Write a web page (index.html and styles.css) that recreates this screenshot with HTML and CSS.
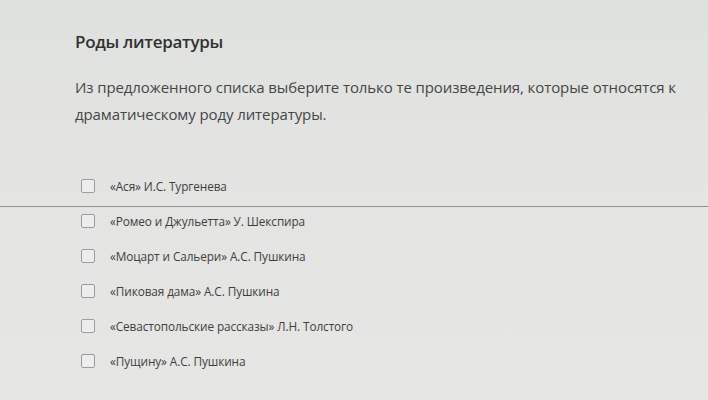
FILE: index.html
```html
<!DOCTYPE html>
<html lang="ru">
<head>
<meta charset="utf-8">
<title>Роды литературы</title>
<link rel="stylesheet" href="styles.css">
</head>
<body>
<div class="page">
  <section class="question">
    <h2 class="title">Роды литературы</h2>
    <p class="text">Из предложенного списка выберите только те произведения, которые относятся к драматическому роду литературы.</p>
  </section>
  <ul class="options">
    <li class="option"><span class="box"></span><span class="label">«Ася» И.С. Тургенева</span></li>
    <li class="divider"></li>
    <li class="option"><span class="box"></span><span class="label">«Ромео и Джульетта» У. Шекспира</span></li>
    <li class="option"><span class="box"></span><span class="label">«Моцарт и Сальери» А.С. Пушкина</span></li>
    <li class="option"><span class="box"></span><span class="label">«Пиковая дама» А.С. Пушкина</span></li>
    <li class="option"><span class="box"></span><span class="label">«Севастопольские рассказы» Л.Н. Толстого</span></li>
    <li class="option"><span class="box"></span><span class="label">«Пущину» А.С. Пушкина</span></li>
  </ul>
</div>
</body>
</html>
```
FILE: styles.css
```css
html, body {
  margin: 0;
  padding: 0;
}
body {
  width: 708px;
  height: 400px;
  overflow: hidden;
  background: linear-gradient(180deg, #dfe1de 0%, #e4e5e2 50%, #e6e7e4 100%);
  font-family: "Open Sans", "Noto Sans", sans-serif;
  color: #3b3c3c;
}
.page {
  padding-top: 30px;
}
.question {
  padding: 0 20px 0 75px;
}
.title {
  margin: 0;
  font-size: 17px;
  font-weight: 600;
  line-height: 24px;
  color: #2f3131;
  letter-spacing: -0.3px;
}
.text {
  margin: 20px 0 0;
  font-size: 15px;
  line-height: 27px;
  color: #444646;
  letter-spacing: -0.1px;
}
.options {
  list-style: none;
  margin: 40px 0 0;
  padding: 0;
}
.option {
  display: flex;
  align-items: center;
  height: 35px;
  padding-left: 81px;
}
.box {
  width: 12px;
  height: 12px;
  border: 1px solid #9b9d9c;
  border-radius: 2px;
  background: #eceded;
  flex: none;
}
.label {
  margin-left: 15px;
  font-size: 11.8px;
  color: #3d3e3e;
  letter-spacing: -0.1px;
}
.divider {
  height: 1px;
  background: #8f9190;
  margin: -1px 0 0;
  position: relative;
  top: 4px;
}
```
